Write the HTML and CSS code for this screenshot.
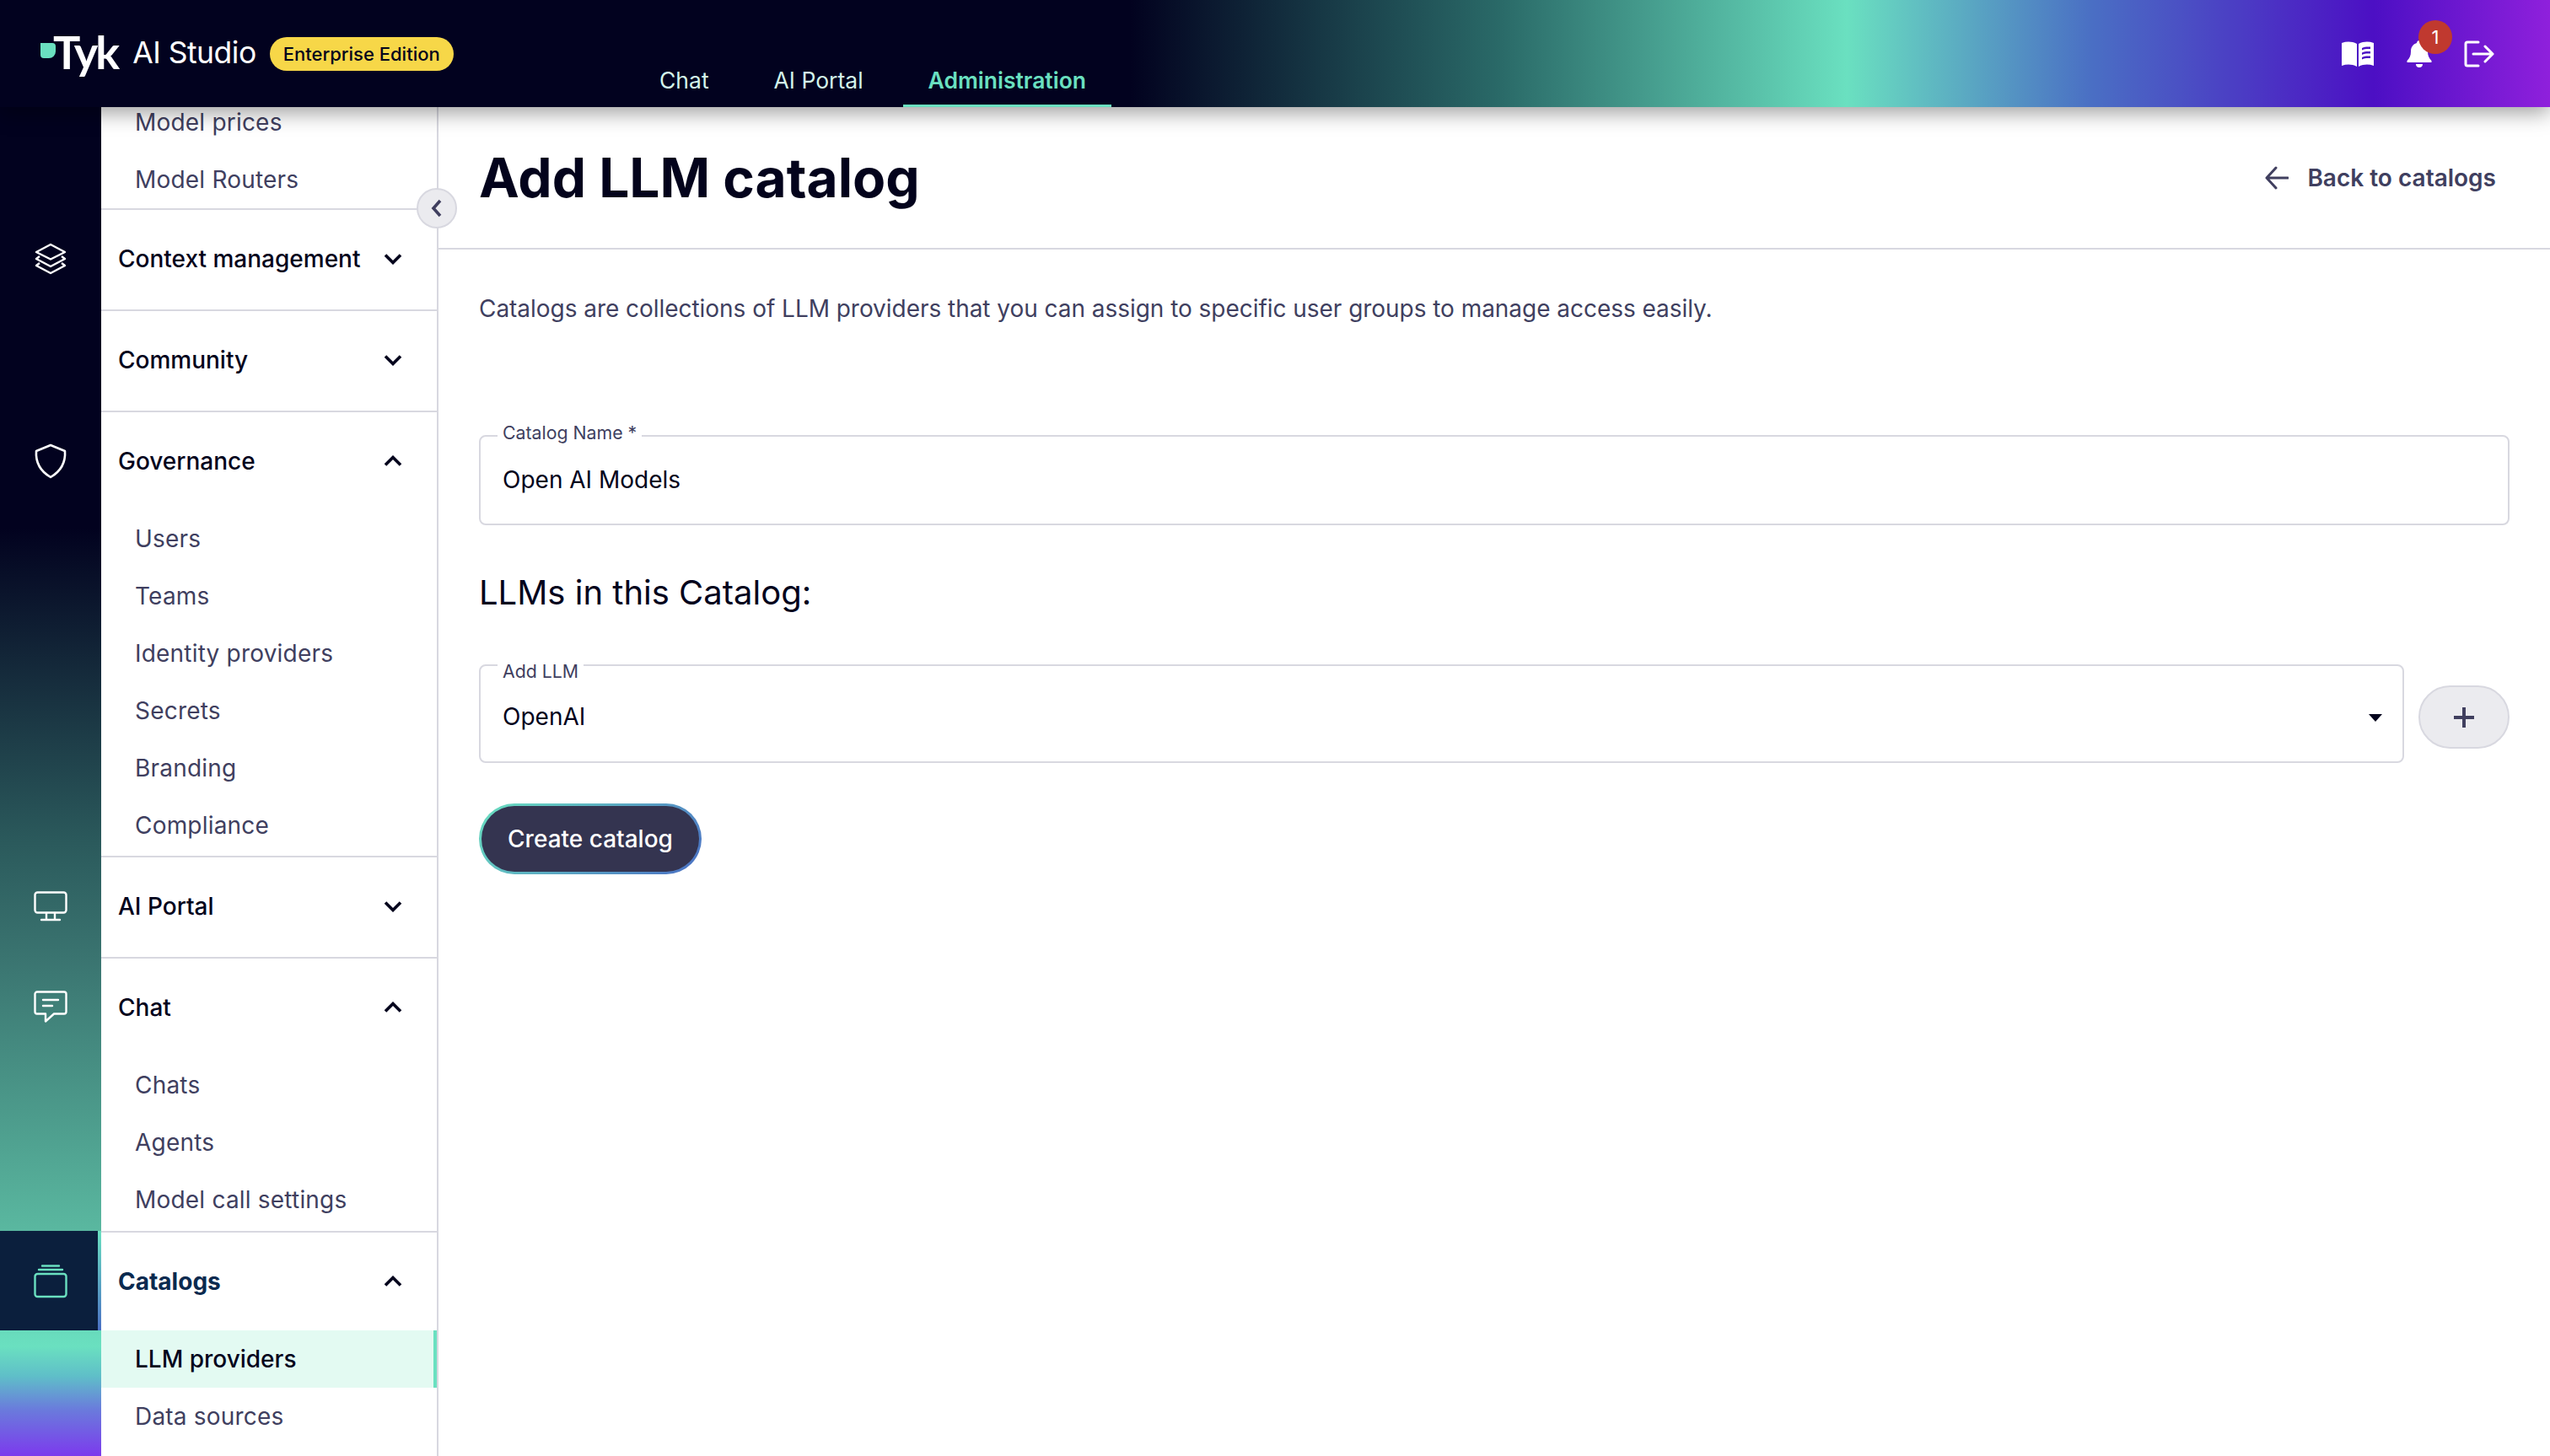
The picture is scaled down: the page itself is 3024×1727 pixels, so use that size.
FILE: index.html
```html
<!DOCTYPE html>
<html lang="en">
<head>
    <meta charset="UTF-8">
    <meta name="viewport" content="width=device-width, initial-scale=1.0">
    <title>Tyk AI Studio - Add LLM catalog</title>
    <link rel="stylesheet" href="styles.css">
</head>
<body>
    <header class="topbar">
        <div class="brand">
            <span class="brand-leaf"></span>
            <span class="brand-tyk">Tyk</span>
            <span class="brand-name">AI Studio</span>
            <span class="brand-badge">Enterprise Edition</span>
        </div>
        <nav class="topnav">
            <a class="topnav-tab">Chat</a>
            <a class="topnav-tab">AI Portal</a>
            <a class="topnav-tab is-active">Administration</a>
        </nav>
        <div class="topbar-actions">
            <svg class="icon-book" width="40" height="32" viewBox="0 0 40 32">
                <path fill="#fff" d="M1 3c6-2 12-2 18 1v27c-6-3-12-3-18-1z"/>
                <path fill="#fff" fill-rule="evenodd" d="M21 4c6-3 12-3 18-1v27c-6-2-12-2-18 1zM25 9v2.500c3-1.500 6-1.800 10-1.500V7.500c-4-.3-7 0-10 1.500zm0 5.500V17c3-1.500 6-1.800 10-1.500V13c-4-.3-7 0-10 1.500zm0 5.500v2.500c3-1.500 6-1.800 10-1.500v-2.500c-4-.3-7 0-10 1.500z"/>
            </svg>
            <span class="bell">
                <svg width="30" height="34" viewBox="0 0 30 34">
                    <path fill="#fff" d="M15 1c2 0 3 1.500 3 3 5 1.500 7 5.500 7 10 0 5 1.500 8 4.500 11v2H.500v-2C3.500 22 5 19 5 14c0-4.500 2-8.500 7-10 0-1.500 1-3 3-3z"/>
                    <path fill="#fff" d="M11 29h8c0 2.500-1.500 4-4 4s-4-1.500-4-4z"/>
                </svg>
                <span class="bell-count">1</span>
            </span>
            <svg width="36" height="32" viewBox="0 0 36 32" fill="none" stroke="#fff" stroke-width="3" stroke-linecap="round" stroke-linejoin="round">
                <path d="M17 2H4a2 2 0 0 0-2 2v24a2 2 0 0 0 2 2h13"/>
                <path d="M11 16h23M25 7l9 9-9 9"/>
            </svg>
        </div>
    </header>

    <div class="layout">
        <aside class="sidebar">
            <div class="side-list">
                <section class="group group-clipped">
                    <div class="rail-cell"></div>
                    <div class="group-body">
                        <a class="side-item">Model prices</a>
                        <a class="side-item">Model Routers</a>
                    </div>
                </section>

                <section class="group">
                    <div class="rail-cell">
                        <svg width="40" height="40" viewBox="0 0 40 40" fill="none" stroke="#fff" stroke-width="2.400" stroke-linejoin="round">
                            <path d="M20 3l17 9-17 8.500L3 12z"/>
                            <path d="M7 17l-4 3 17 9 17-9-4-3"/>
                            <path d="M7 25l-4 3 17 9 17-9-4-3"/>
                        </svg>
                    </div>
                    <div class="group-body">
                        <div class="group-head">Context management
                            <svg class="chev" width="22" height="14" viewBox="0 0 22 14"><path d="M2 2.500l9 9 9-9"/></svg>
                        </div>
                    </div>
                </section>

                <section class="group">
                    <div class="rail-cell"></div>
                    <div class="group-body">
                        <div class="group-head">Community
                            <svg class="chev" width="22" height="14" viewBox="0 0 22 14"><path d="M2 2.500l9 9 9-9"/></svg>
                        </div>
                    </div>
                </section>

                <section class="group">
                    <div class="rail-cell">
                        <svg width="40" height="42" viewBox="0 0 40 42" fill="none" stroke="#fff" stroke-width="2.600" stroke-linejoin="round">
                            <path d="M20 2l17 7c1 14-5 24-17 31C8 33 2 23 3 9z"/>
                        </svg>
                    </div>
                    <div class="group-body">
                        <div class="group-head">Governance
                            <svg class="chev" width="22" height="14" viewBox="0 0 22 14"><path d="M2 11.500l9-9 9 9"/></svg>
                        </div>
                        <a class="side-item">Users</a>
                        <a class="side-item">Teams</a>
                        <a class="side-item">Identity providers</a>
                        <a class="side-item">Secrets</a>
                        <a class="side-item">Branding</a>
                        <a class="side-item">Compliance</a>
                    </div>
                </section>

                <section class="group">
                    <div class="rail-cell">
                        <svg width="40" height="36" viewBox="0 0 40 36" fill="none" stroke="#fff" stroke-width="2.400" stroke-linejoin="round" stroke-linecap="round">
                            <rect x="1.500" y="1.500" width="37" height="24" rx="3"/>
                            <path d="M15 26v7M25 26v7M9 34h22"/>
                        </svg>
                    </div>
                    <div class="group-body">
                        <div class="group-head">AI Portal
                            <svg class="chev" width="22" height="14" viewBox="0 0 22 14"><path d="M2 2.500l9 9 9-9"/></svg>
                        </div>
                    </div>
                </section>

                <section class="group group-chat">
                    <div class="rail-cell">
                        <svg width="40" height="40" viewBox="0 0 40 40" fill="none" stroke="#fff" stroke-width="2.400" stroke-linejoin="round" stroke-linecap="round">
                            <path d="M4 1.500h32a2.500 2.500 0 0 1 2.500 2.500v21a2.500 2.500 0 0 1-2.500 2.500H24l-10 9v-9H4A2.500 2.500 0 0 1 1.500 25V4A2.500 2.500 0 0 1 4 1.500z"/>
                            <path d="M11 11h18M11 18h11"/>
                        </svg>
                    </div>
                    <div class="group-body">
                        <div class="group-head">Chat
                            <svg class="chev" width="22" height="14" viewBox="0 0 22 14"><path d="M2 11.500l9-9 9 9"/></svg>
                        </div>
                        <a class="side-item">Chats</a>
                        <a class="side-item">Agents</a>
                        <a class="side-item">Model call settings</a>
                    </div>
                </section>

                <section class="group group-last">
                    <div class="rail-cell is-active">
                        <svg width="40" height="40" viewBox="0 0 40 40" fill="none" stroke="#6ae0c0" stroke-width="2.400" stroke-linejoin="round" stroke-linecap="round">
                            <rect x="1.500" y="11" width="37" height="27" rx="3"/>
                            <path d="M6 6h28M10 1.500h20"/>
                        </svg>
                    </div>
                    <div class="group-body">
                        <div class="group-head is-active">Catalogs
                            <svg class="chev" width="22" height="14" viewBox="0 0 22 14"><path d="M2 11.500l9-9 9 9"/></svg>
                        </div>
                        <a class="side-item is-active">LLM providers</a>
                        <a class="side-item">Data sources</a>
                    </div>
                </section>
            </div>
            <button class="collapse-btn">
                <svg width="14" height="22" viewBox="0 0 14 22"><path d="M11 2l-8 9 8 9"/></svg>
            </button>
        </aside>

        <main class="content">
            <div class="page-head">
                <h1 class="page-title">Add LLM catalog</h1>
                <a class="back-link">
                    <svg width="28" height="28" viewBox="0 0 28 28" fill="none" stroke="#403f5f" stroke-width="3" stroke-linecap="round" stroke-linejoin="round">
                        <path d="M27 14H2M13 2L2 14l11 12"/>
                    </svg>
                    Back to catalogs
                </a>
            </div>
            <div class="page-body">
                <p class="intro">Catalogs are collections of LLM providers that you can assign to specific user groups to manage access easily.</p>

                <fieldset class="field field-name">
                    <legend class="field-label">Catalog Name *</legend>
                    <div class="field-value">Open AI Models</div>
                </fieldset>

                <h2 class="section-title">LLMs in this Catalog:</h2>

                <div class="add-row">
                    <fieldset class="field field-select">
                        <legend class="field-label">Add LLM</legend>
                        <div class="field-value">OpenAI</div>
                        <span class="caret"></span>
                    </fieldset>
                    <button class="add-btn">
                        <svg width="26" height="26" viewBox="0 0 26 26" stroke="#403f5f" stroke-width="4"><path d="M13 1v24M1 13h24"/></svg>
                    </button>
                </div>

                <button class="create-btn">Create catalog</button>
            </div>
        </main>
    </div>
</body>
</html>
```

FILE: styles.css
```css
:root {
    --ink: #03031c;
    --ink-soft: #403f5f;
    --line: #d8d8e0;
    --mint: #6ae0c0;
}

* {
    margin: 0;
    padding: 0;
    box-sizing: border-box;
}

body {
    font-family: Inter, "Liberation Sans", sans-serif;
    color: var(--ink);
    background: #fff;
    height: 100vh;
    overflow: hidden;
    display: flex;
    flex-direction: column;
}

/* top bar */
.topbar {
    position: relative;
    z-index: 5;
    flex: 0 0 127px;
    display: flex;
    align-items: stretch;
    padding: 0 66px 0 48px;
    background: linear-gradient(90deg, #02021f 0, #02021f 1340px, #2a6a68 1780px, #6ae0c0 2190px, #4a6fc4 2480px, #4c0fc4 2815px, #8f20dc 3024px);
    box-shadow: 0 6px 24px rgba(0, 0, 0, 0.4);
}

.brand {
    display: flex;
    align-items: center;
    height: 127px;
    width: 704px;
    flex: none;
}

.brand-leaf {
    width: 18px;
    height: 18px;
    margin-top: -8px;
    background: var(--mint);
    border-radius: 0 4px 8px 4px;
}

.brand-tyk {
    margin-left: -3px;
    margin-top: -4px;
    font-family: Lato, sans-serif;
    font-size: 54px;
    font-weight: 700;
    letter-spacing: -3px;
    color: #fff;
}

.brand-name {
    margin-left: 18px;
    margin-top: -3px;
    font-size: 35.500px;
    font-weight: 400;
    color: #fff;
    letter-spacing: -0.5px;
}

.brand-badge {
    margin-left: 16px;
    padding: 0 16px;
    height: 40px;
    line-height: 40px;
    border-radius: 20px;
    background: #f7d748;
    color: var(--ink);
    font-size: 22px;
    font-weight: 500;
}

.topnav {
    display: flex;
    align-items: stretch;
    gap: 17px;
}

.topnav-tab {
    display: flex;
    align-items: flex-end;
    padding: 0 30px 16px;
    font-size: 26.500px;
    font-weight: 400;
    color: #d4f5ea;
}

.topnav-tab.is-active {
    font-weight: 600;
    color: var(--mint);
    border-bottom: 3px solid var(--mint);
    padding-bottom: 13px;
}

.topbar-actions {
    margin-left: auto;
    display: flex;
    align-items: center;
    gap: 38px;
}

.bell {
    position: relative;
    display: flex;
}

.bell-count {
    position: absolute;
    top: -23px;
    left: 14px;
    width: 40px;
    height: 40px;
    border-radius: 50%;
    background: #c0392f;
    color: #fff;
    font-size: 22px;
    line-height: 40px;
    text-align: center;
}

/* sidebar */
.layout {
    flex: 1;
    display: flex;
    min-height: 0;
}

.sidebar {
    position: relative;
    flex: 0 0 520px;
    background: linear-gradient(180deg, #02021f 0, #02021f 500px, #2b5a5c 873px, #3a7470 1009px, #5ab8a0 1334px, var(--mint) 1470px, #5fbfc8 1505px, #6a7bdc 1545px, #7c3aed 1600px);
}

.side-list {
    height: 100%;
    overflow: hidden;
    display: flex;
    flex-direction: column;
}

.group {
    display: grid;
    grid-template-columns: 120px 1fr;
    align-items: start;
}

.group-clipped {
    margin-top: -16px;
}

.group-last {
    flex: 1;
    align-items: stretch;
}

.rail-cell {
    height: 118px;
    display: flex;
    align-items: center;
    justify-content: center;
}

.rail-cell svg {
    margin-top: 2px;
}

.rail-cell.is-active {
    background: #0b1f3d;
    border-right: 4px solid;
    border-image: linear-gradient(180deg, var(--mint), #4a6fc4) 1;
}

.rail-cell.is-active svg {
    margin-left: 4px;
}

.group-clipped .rail-cell {
    height: 0;
}

.group-body {
    background: #fff;
    border-right: 2px solid var(--line);
    border-top: 2px solid var(--line);
    min-height: 120px;
    padding-bottom: 2px;
}

.group-clipped .group-body {
    border-top: 0;
    min-height: 0;
    padding-bottom: 0;
}

.group-chat .group-body {
    padding-bottom: 3px;
}

.group-head {
    height: 116px;
    padding: 0 41px 0 20px;
    display: flex;
    align-items: center;
    justify-content: space-between;
    font-size: 28px;
    font-weight: 500;
    color: var(--ink);
}

.group-head.is-active {
    font-weight: 700;
    color: #0b2a4f;
}

.chev {
    fill: none;
    stroke: var(--ink);
    stroke-width: 3.600;
}

.side-item {
    display: block;
    height: 68px;
    line-height: 69px;
    padding-left: 40px;
    font-size: 28px;
    letter-spacing: 0.2px;
    color: var(--ink-soft);
}

.side-item.is-active {
    background: #e3faf2;
    color: var(--ink);
    font-weight: 500;
    letter-spacing: 0;
    border-right: 4px solid var(--mint);
}

.collapse-btn {
    position: absolute;
    top: 96px;
    left: 494px;
    width: 48px;
    height: 48px;
    border-radius: 50%;
    background: #ebebef;
    border: 2px solid var(--line);
    display: flex;
    align-items: center;
    justify-content: center;
}

.collapse-btn path {
    fill: none;
    stroke: var(--ink-soft);
    stroke-width: 3.600;
}

/* main */
.content {
    flex: 1;
    min-width: 0;
}

.page-head {
    height: 169px;
    padding: 0 48px;
    display: flex;
    align-items: center;
    justify-content: space-between;
    border-bottom: 2px solid var(--line);
}

.page-title {
    font-size: 64px;
    font-weight: 700;
    color: var(--ink);
    margin-top: -1px;
}

.back-link {
    display: flex;
    align-items: center;
    gap: 22px;
    padding-right: 16px;
    font-size: 28px;
    font-weight: 600;
    color: var(--ink-soft);
}

.page-body {
    padding: 49px 48px 0;
}

.intro {
    font-size: 28px;
    line-height: 42px;
    letter-spacing: -0.04px;
    color: var(--ink-soft);
}

.field {
    position: relative;
    border: 2px solid var(--line);
    border-radius: 8px;
    padding: 0 26px;
    min-width: 0;
}

.field-label {
    font-size: 21.300px;
    line-height: 22px;
    color: var(--ink-soft);
    padding: 0 6px;
    margin-left: -6px;
}

.field-name {
    margin-top: 115px;
    height: 121px;
}

.field-name .field-label {
    padding-bottom: 8px;
}

.field-value {
    font-size: 28px;
    line-height: 40px;
    color: var(--ink);
}

.field-name .field-value {
    padding-top: 17px;
}

.section-title {
    margin-top: 52px;
    font-size: 40px;
    line-height: 56px;
    font-weight: 400;
    color: var(--ink);
}

.add-row {
    margin-top: 40px;
    display: flex;
    align-items: flex-start;
    gap: 17px;
}

.field-select {
    flex: 1;
    height: 134px;
}

.field-select .field-label {
    padding-top: 14px;
}

.field-select .field-value {
    padding-top: 23px;
}

.caret {
    position: absolute;
    right: 24px;
    top: 40px;
    border-left: 8px solid transparent;
    border-right: 8px solid transparent;
    border-top: 9px solid var(--ink);
}

.add-btn {
    flex: 0 0 108px;
    height: 75px;
    margin-top: 42px;
    border-radius: 38px;
    background: #ebebef;
    border: 2px solid var(--line);
    display: flex;
    align-items: center;
    justify-content: center;
}

.create-btn {
    display: block;
    margin-top: 48px;
    width: 264px;
    height: 84px;
    border-radius: 42px;
    border: 3px solid transparent;
    background: linear-gradient(#343450, #343450) padding-box, linear-gradient(135deg, var(--mint), #4a6fc4) border-box;
    color: #fff;
    font-family: inherit;
    font-size: 28px;
    font-weight: 500;
}
```
